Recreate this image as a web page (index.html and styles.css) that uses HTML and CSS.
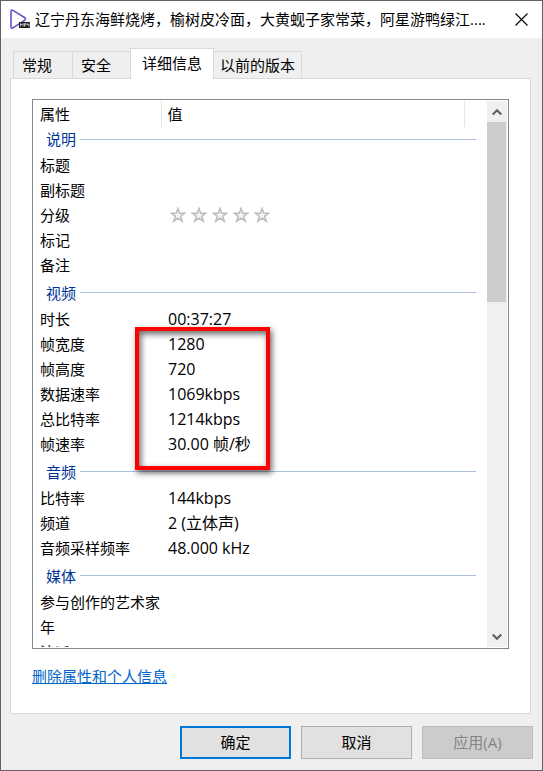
FILE: index.html
```html
<!DOCTYPE html>
<html lang="zh-CN">
<head>
    <meta charset="UTF-8">
    <meta name="viewport" content="width=device-width, initial-scale=1.0">
    <title>属性</title>
    <link rel="stylesheet" href="styles.css">
</head>
<body>
    <div class="window">
        <header class="titlebar">
            <svg class="app-icon" width="22" height="22" viewBox="0 0 22 22" aria-hidden="true">
                <path d="M2 2.200Q2 .4 4 1.400L15.500 8.500Q17.500 10 15.500 11.300L4 18.800Q2 19.800 2 17.800Z" fill="#fff" stroke="#6a50d0" stroke-width="1.600"/>
                <rect x="10" y="13" width="11" height="6" fill="#222"/>
                <path d="M11.500 17.500v-3l1.300 1.500 1.300-1.500v3M15.500 17.500v-3h1.500v1.500h-1.500M18.500 14.500v1.500h1.500M20 14.500v3" fill="none" stroke="#ddd" stroke-width=".8"/>
            </svg>
            <h1 class="title">辽宁丹东海鲜烧烤，榆树皮冷面，大黄蚬子家常菜，阿星游鸭绿江....</h1>
            <button class="close" type="button" aria-label="关闭">
                <svg width="13" height="13" viewBox="0 0 13 13"><path d="M.5.5l12 12M12.500.5l-12 12" stroke="#000" stroke-width="1.100"/></svg>
            </button>
        </header>
        <nav class="tabs" role="tablist">
            <button class="tab" type="button" role="tab">常规</button>
            <button class="tab" type="button" role="tab">安全</button>
            <button class="tab active" type="button" role="tab" aria-selected="true">详细信息</button>
            <button class="tab last" type="button" role="tab">以前的版本</button>
        </nav>
        <main class="panel">
            <div class="list">
                <div class="rows">
                    <table class="details">
                        <colgroup><col class="col-name"><col><col class="col-end"></colgroup>
                        <thead>
                            <tr><th scope="col">属性</th><th scope="col">值</th><td></td></tr>
                        </thead>
                        <tbody>
                            <tr class="group"><th colspan="3"><div class="group-name">说明</div></th></tr>
                            <tr><td>标题</td><td></td></tr>
                            <tr><td>副标题</td><td></td></tr>
                            <tr>
                                <td>分级</td>
                                <td>
                                    <div class="stars">
                                        <svg class="star" viewBox="0 0 16 16"><path d="M8 1.500l1.700 4.700h5l-4 3 1.500 5L8 11.200l-4.200 3 1.500-5-4-3h5z"/></svg>
                                        <svg class="star" viewBox="0 0 16 16"><path d="M8 1.500l1.700 4.700h5l-4 3 1.500 5L8 11.200l-4.200 3 1.500-5-4-3h5z"/></svg>
                                        <svg class="star" viewBox="0 0 16 16"><path d="M8 1.500l1.700 4.700h5l-4 3 1.500 5L8 11.200l-4.200 3 1.500-5-4-3h5z"/></svg>
                                        <svg class="star" viewBox="0 0 16 16"><path d="M8 1.500l1.700 4.700h5l-4 3 1.500 5L8 11.200l-4.200 3 1.500-5-4-3h5z"/></svg>
                                        <svg class="star" viewBox="0 0 16 16"><path d="M8 1.500l1.700 4.700h5l-4 3 1.500 5L8 11.200l-4.200 3 1.500-5-4-3h5z"/></svg>
                                    </div>
                                </td>
                            </tr>
                            <tr><td>标记</td><td></td></tr>
                            <tr><td>备注</td><td></td></tr>
                            <tr class="group"><th colspan="3"><div class="group-name">视频</div></th></tr>
                            <tr><td>时长</td><td>00:37:27</td></tr>
                            <tr><td>帧宽度</td><td>1280</td></tr>
                            <tr><td>帧高度</td><td>720</td></tr>
                            <tr><td>数据速率</td><td>1069kbps</td></tr>
                            <tr><td>总比特率</td><td>1214kbps</td></tr>
                            <tr><td>帧速率</td><td>30.00 帧/秒</td></tr>
                            <tr class="group"><th colspan="3"><div class="group-name">音频</div></th></tr>
                            <tr><td>比特率</td><td>144kbps</td></tr>
                            <tr><td>频道</td><td>2 (立体声)</td></tr>
                            <tr><td>音频采样频率</td><td>48.000 kHz</td></tr>
                            <tr class="group"><th colspan="3"><div class="group-name">媒体</div></th></tr>
                            <tr><td>参与创作的艺术家</td><td></td></tr>
                            <tr><td>年</td><td></td></tr>
                            <tr><td>流派</td><td></td></tr>
                        </tbody>
                    </table>
                </div>
                <div class="scrollbar">
                    <button class="arrow" type="button" aria-label="向上滚动">
                        <svg width="10" height="8" viewBox="0 0 10 8"><path d="M.7 6.500L5 2.200l4.300 4.300"/></svg>
                    </button>
                    <div class="thumb"></div>
                    <button class="arrow down" type="button" aria-label="向下滚动">
                        <svg width="10" height="8" viewBox="0 0 10 8"><path d="M.7 1.500L5 5.800l4.300-4.300"/></svg>
                    </button>
                </div>
                <div class="highlight"></div>
            </div>
            <a class="remove" href="#">删除属性和个人信息</a>
        </main>
        <footer class="buttons">
            <button class="btn primary" type="button">确定</button>
            <button class="btn" type="button">取消</button>
            <button class="btn" type="button" disabled>应用(A)</button>
        </footer>
    </div>
</body>
</html>
```
FILE: styles.css
```css
* {
    box-sizing: border-box;
}
body {
    margin: 0;
    font-family: "Open Sans", "Noto Sans CJK SC", sans-serif;
    font-size: 15px;
    line-height: 22px;
    color: #000;
}
button {
    font: inherit;
    color: inherit;
    padding: 0;
    border: 0;
    background: none;
}
.window {
    display: flex;
    flex-direction: column;
    height: 100vh;
    border: 1px solid #636163;
    background-color: #efefef;
}
.titlebar {
    display: flex;
    align-items: center;
    height: 37px;
    padding-left: 8px;
    background-color: #fff;
}
.app-icon {
    flex: none;
    margin-right: 4px;
}
.title {
    flex: 1;
    margin: 0;
    padding-bottom: 2px;
    font-size: 15px;
    font-weight: normal;
    white-space: nowrap;
    overflow: hidden;
}
.close {
    display: flex;
    align-items: center;
    justify-content: center;
    width: 42px;
    height: 37px;
}
.tabs {
    display: flex;
    align-items: flex-end;
    height: 40px;
    padding-left: 12px;
}
.tab {
    height: 27px;
    width: 59px;
    padding-right: 12px;
    border: 1px solid #d9d9d9;
    border-right: 0;
    border-bottom: 0;
}
.tab.active {
    position: relative;
    width: 84px;
    height: 31px;
    margin: 0 0 -1px -1px;
    padding: 0 0 2px;
    border-right: 1px solid #d9d9d9;
    background-color: #fff;
}
.tab.last {
    width: 88px;
    padding: 0;
    border-left: 0;
    border-right: 1px solid #d9d9d9;
}
.panel {
    flex: 1;
    min-height: 0;
    display: flex;
    flex-direction: column;
    align-items: flex-start;
    margin: 0 11px 0 9px;
    padding: 20px 21px 26px;
    border: 1px solid #d9d9d9;
    background-color: #fff;
}
.list {
    position: relative;
    flex: 1;
    min-height: 0;
    display: flex;
    width: 100%;
    padding: 1px;
    border: 1px solid #828790;
}
.rows {
    flex: 1;
    overflow: hidden;
}
.details {
    width: 100%;
    table-layout: fixed;
    border-collapse: collapse;
}
.col-name {
    width: 127px;
}
.col-end {
    width: 23px;
}
.details th,
.details td {
    height: 25px;
    padding: 0 0 2px 6px;
    font-weight: normal;
    text-align: left;
    white-space: nowrap;
}
.details td + td {
    padding-left: 7px;
    font-size: 16px;
}
.details thead th,
.details thead td {
    height: 26px;
    padding-bottom: 0;
}
.details thead th {
    border-right: 1px solid #e5e5e5;
}
.details .group th {
    height: 26px;
    padding: 0 11px 2px 12px;
}
.details .group ~ .group th {
    height: 29px;
    padding-bottom: 0;
}
.group-name {
    display: flex;
    align-items: center;
    gap: 4px;
    color: #003399;
}
.group-name::after {
    content: "";
    flex: 1;
    height: 1px;
    background-color: #b0bfdf;
}
.stars {
    display: flex;
    gap: 5px;
    padding-left: 2px;
}
.star {
    width: 16px;
    height: 16px;
    fill: #f4f4f4;
    stroke: #bdbdbd;
    stroke-width: 1.6;
}
.scrollbar {
    display: flex;
    flex-direction: column;
    width: 20px;
    background-color: #f0f0f0;
}
.arrow {
    display: flex;
    align-items: center;
    justify-content: center;
    height: 21px;
}
.arrow path {
    fill: none;
    stroke: #606060;
    stroke-width: 2.2;
}
.arrow.down {
    margin-top: auto;
}
.thumb {
    width: 19px;
    height: 33%;
    background-color: #cdcdcd;
}
/* marker drawn over the video values */
.highlight {
    position: absolute;
    left: 102px;
    top: 227px;
    width: 135px;
    height: 143px;
    border: 4px solid #fe0000;
    box-shadow: 2px 3px 6px rgba(0, 0, 0, 0.6), inset 2px 3px 6px rgba(0, 0, 0, 0.6);
}
.remove {
    margin-top: 16px;
    color: #0066cc;
}
.buttons {
    display: flex;
    justify-content: flex-end;
    gap: 10px;
    padding: 12px 9px 11px;
}
.btn {
    width: 111px;
    height: 33px;
    padding-bottom: 2px;
    border: 1px solid #adadad;
    background-color: #e1e1e1;
}
.btn.primary {
    border: 2px solid #0078d7;
}
.btn:disabled {
    border-color: #bfbfbf;
    background-color: #cccccc;
    color: #838383;
}
```
